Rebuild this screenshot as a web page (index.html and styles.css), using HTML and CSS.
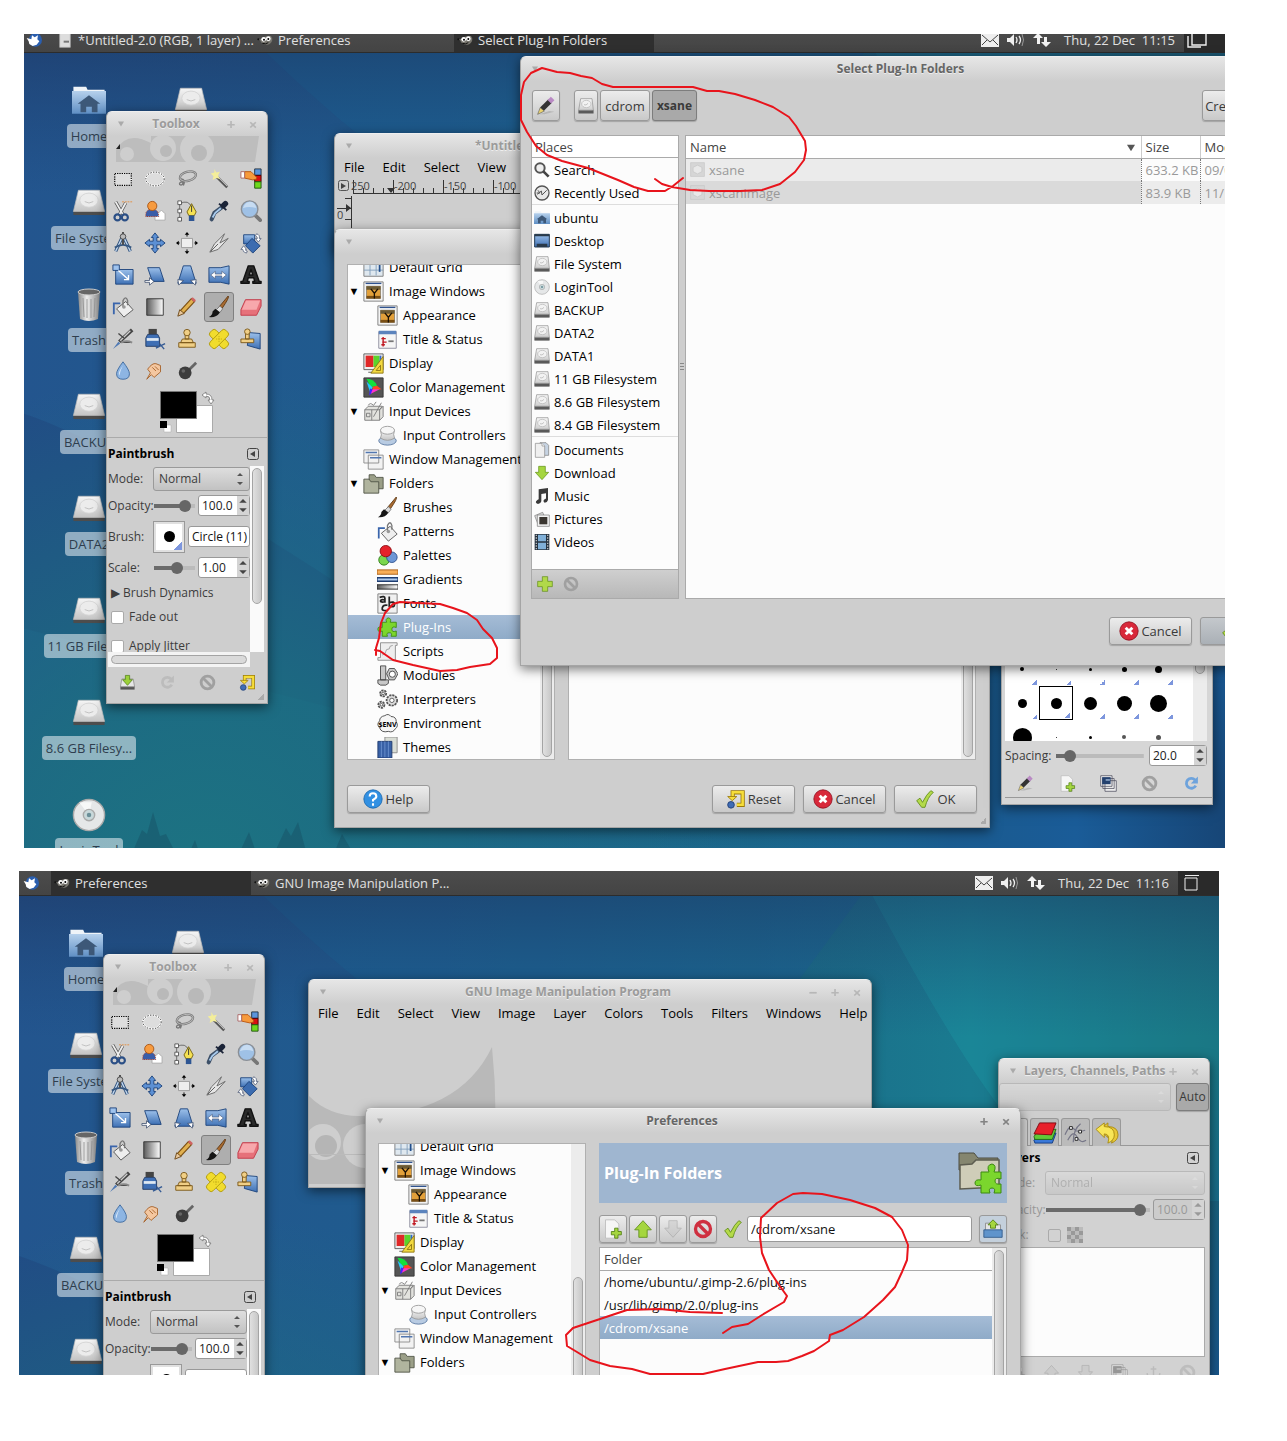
FILE: index.html
```html
<!DOCTYPE html>
<html lang="en">
<head>
<meta charset="utf-8">
<title>GIMP plug-in folders</title>
<link rel="stylesheet" href="styles.css">
</head>
<body>
<svg class="sprite" width="0" height="0" aria-hidden="true">
<defs>
<linearGradient id="gs" x2="0" y2="1"><stop stop-color="#f6f6f6"/><stop offset="1" stop-color="#c4c4c4"/></linearGradient>
<linearGradient id="gb" x2="0" y2="1"><stop stop-color="#9cc0ea"/><stop offset="1" stop-color="#3e70b4"/></linearGradient>
<linearGradient id="gh" x2="1" y2="0"><stop stop-color="#5b5b5b"/><stop offset="1" stop-color="#fff"/></linearGradient>
<linearGradient id="gm" x2="1" y2="0"><stop stop-color="#888"/><stop offset=".4" stop-color="#eee"/><stop offset="1" stop-color="#888"/></linearGradient>
<linearGradient id="gf" x2="0" y2="1"><stop stop-color="#b5d0ec"/><stop offset="1" stop-color="#5f8fc4"/></linearGradient>
<linearGradient id="wall" x2="1" y2="0"><stop stop-color="#23558e"/><stop offset=".35" stop-color="#1f5c8e"/><stop offset=".6" stop-color="#1b6b88"/><stop offset=".78" stop-color="#1a7b90"/><stop offset="1" stop-color="#1a6370"/></linearGradient>
<linearGradient id="dusk" x2="0" y2="1"><stop stop-color="#1c2e58" stop-opacity=".55"/><stop offset=".2" stop-color="#1c3e70" stop-opacity="0"/></linearGradient>
<radialGradient id="sea" gradientUnits="userSpaceOnUse" cx="180" cy="860" r="520"><stop stop-color="#1c7482"/><stop offset=".4" stop-color="#1c7080" stop-opacity=".8"/><stop offset="1" stop-color="#1c7080" stop-opacity="0"/></radialGradient>
<radialGradient id="deep" gradientUnits="userSpaceOnUse" cx="1240" cy="800" r="620"><stop stop-color="#16406e"/><stop offset=".3" stop-color="#1a5c98"/><stop offset=".5" stop-color="#1a5490" stop-opacity=".8"/><stop offset="1" stop-color="#1a5c90" stop-opacity="0"/></radialGradient>
</defs>
<symbol id="wallpaper" viewBox="0 0 1220 830">
<path fill="url(#wall)" d="M0 0h1220v830H0z"/>
<path fill="#1b6698" opacity=".55" d="M219 0C330 110 430 190 640 300L860 0z"/>
<path fill="#1c9aa6" opacity=".35" d="M840 0c60 110 120 230 220 330h160V0z"/>
<path fill="#20467e" opacity=".55" d="M0 385c60 20 180 80 330 180v120L0 600z"/>
<path fill="url(#dusk)" d="M0 0h1220v830H0z"/>
<path fill="url(#sea)" d="M0 0h1220v830H0z"/>
<path fill="url(#deep)" d="M0 0h1220v830H0z"/>
<path fill="#174c60" opacity=".4" d="M108 830l12-28 5 4 6-22 7 24 6-2 12 24zM165 830l8-18 6 18zM215 830l12-26 9 26zM250 830l14-30 5 8 7-14 10 36zM310 830l10-24 14 24z"/>
</symbol>
<symbol id="disk" viewBox="0 0 24 24"><path fill="#4d4d4d" d="M1 17h22v3.500H1z"/><path fill="url(#gs)" stroke="#bbb" stroke-width=".5" d="M4.500 3h15L23 18H1z"/><ellipse cx="12" cy="10" rx="6.500" ry="5" fill="#ececec" stroke="#d2d2d2" stroke-width=".6"/><path stroke="#bbb" stroke-width=".6" fill="none" d="M9 11q3 2 6 0"/></symbol>
<symbol id="hdd" viewBox="0 0 24 24"><path fill="url(#gs)" stroke="#8c8c8c" d="M4 1h17l2 17v5H1v-5z"/><ellipse cx="12.500" cy="9" rx="7" ry="5.500" fill="#f2f2f2" stroke="#b4b4b4"/><path fill="#5a5a5a" d="M1 18.500h22V23H1z"/><path stroke="#aaa" d="M2 18h20M9 10q3 2 6-2" fill="none"/></symbol>
<symbol id="home" viewBox="0 0 24 24"><path fill="#eef3f8" d="M1 2h9l1 2h12v4H1z"/><path fill="url(#gf)" d="M0 5h24v16H0z"/><path fill="#3d5878" d="M12 8l8 6h-2v6h-4v-4h-4v4H6v-6H4z"/></symbol>
<symbol id="trash" viewBox="0 0 24 34"><path fill="url(#gm)" d="M1 4h22l-2 27q-9 4-18 0z"/><ellipse cx="12" cy="4" rx="11" ry="3" fill="#666" stroke="#ccc"/><path stroke="#999" d="M6 10l1 19M10 11v19M14 11v19M18 10l-1 19"/></symbol>
<symbol id="cd" viewBox="0 0 24 24"><circle cx="12" cy="12" r="11" fill="#e5e7e8" stroke="#a9a9a9"/><path fill="#fff" opacity=".7" d="M12 12L5 3h9z"/><circle cx="12" cy="12" r="4" fill="#c8d8da" stroke="#aaa"/><circle cx="12" cy="12" r="1.600" fill="#6b8f98"/></symbol>
<symbol id="xfce" viewBox="0 0 24 24"><circle cx="14" cy="12" r="10" fill="#2a5eae"/><path fill="#fff" d="M1 9l7 2 1-6 4 3 5-3-1 6 3 3-4 5-6 2-5-3-1-4z"/></symbol>
<symbol id="wilber" viewBox="0 0 24 16"><path fill="#77756e" d="M2 6l3 1q8-6 16-5l2 4q0 7-7 9-9 0-11-6z"/><circle cx="10" cy="7" r="3.500" fill="#fff"/><circle cx="17" cy="6" r="3.500" fill="#fff"/><circle cx="10.500" cy="7.500" r="1.500"/><circle cx="17" cy="6.500" r="1.500"/><circle cx="2" cy="7" r="1.500" fill="#111"/><path stroke="#111" stroke-width="1.500" d="M8 13q5 2 9-1" fill="none"/></symbol>
<symbol id="doc" viewBox="0 0 24 24"><path fill="#ddd" stroke="#aaa" d="M4 1h16v22H4z"/><path fill="#777" d="M10 13h8v3h-8z"/></symbol>
<symbol id="mail" viewBox="0 0 18 14"><path fill="#eee" d="M0 0h18v14H0z"/><path stroke="#444" fill="none" d="M1 2l8 7 8-7M1 12l5-5M17 12l-5-5"/></symbol>
<symbol id="vol" viewBox="0 0 18 14"><path fill="#eee" d="M0 5h3l4-4v12L3 9H0z"/><path stroke="#eee" fill="none" stroke-width="1.300" d="M9 4q2 3 0 6M12 3q3 4 0 8"/><path stroke="#999" fill="none" d="M15 1q3 6 0 12"/></symbol>
<symbol id="net" viewBox="0 0 18 14"><path fill="#f2f2f2" d="M5 0l5 5H7v6H4V5H0zM11 4h3v5h4l-5 5-5-5h3z"/></symbol>
<symbol id="desk" viewBox="0 0 20 16"><path fill="none" stroke="#eee" stroke-width="1.400" d="M5 1h14v12H5zM1 4v11h13"/></symbol>
<symbol id="desk1" viewBox="0 0 20 16"><path fill="none" stroke="#eee" d="M4 3h12v12H4zM4 .500h14"/></symbol>
<symbol id="banner" viewBox="0 0 144 26"><path fill="#bdbdbd" d="M1 26V14Q12-6 36 7V0h108l-4 26z"/><g fill="#cecece"><circle cx="12" cy="18" r="7"/><circle cx="48" cy="12" r="13"/><circle cx="82" cy="13" r="17"/></g><circle cx="51" cy="15" r="6" fill="#b9b9b9"/><circle cx="84" cy="17" r="8" fill="#b9b9b9"/><path fill="#222" d="M5 8v5H1z"/></symbol>
<symbol id="rect" viewBox="0 0 24 24"><path fill="#ddd" stroke="#fff" stroke-width="1.300" d="M3 6h18v13H3z"/><path fill="none" stroke="#000" stroke-dasharray="1.500 1" stroke-width="1.300" d="M3 6h18v13H3z"/></symbol>
<symbol id="oval" viewBox="0 0 24 24"><ellipse cx="12" cy="12" rx="10" ry="7.500" fill="#ddd" stroke="#fff" stroke-width="2"/><ellipse cx="12" cy="12" rx="10" ry="7.500" fill="none" stroke="#222" stroke-dasharray="1.500 1.500"/></symbol>
<symbol id="lasso" viewBox="0 0 24 24"><g fill="none" stroke="#777"><ellipse cx="13" cy="9" rx="9" ry="5" stroke-width="2.600" transform="rotate(-15 13 9)"/><path d="M5 12q6 0 3 7M8 15q-5 0-4 3 3 2 4-3" stroke-width="1.500"/></g><ellipse cx="13" cy="9" rx="9" ry="5" fill="none" stroke="#bbb" transform="rotate(-15 13 9)"/></symbol>
<symbol id="wand" viewBox="0 0 24 24"><path stroke="#555" stroke-width="3" d="M9 9l12 12"/><path stroke="#ccc" d="M10 9l11 11"/><path fill="#f4ee9a" d="M7 1l2 4 4-1-2 4 2 4-4-1-4 2 1-4-3-3 4-1z"/></symbol>
<symbol id="colorsel" viewBox="0 0 24 24"><path fill="#5a94dc" stroke="#234" d="M16 1h7v7h-7z"/><path fill="#d81010" stroke="#400" d="M16 8h7v7h-7z"/><path fill="#6ed81c" stroke="#251" d="M16 15h7v7h-7z"/><path fill="#f79a3c" stroke="#b85510" d="M5 4h7l6 6v2l-4 1-9-2z"/><path fill="#fff" stroke="#a66" d="M1 4h4v7H1z"/></symbol>
<symbol id="scissors" viewBox="0 0 24 24"><path stroke="#555" stroke-width="3.500" d="M4 2l8 14M15 3L8 16"/><path stroke="#eee" stroke-width="2" d="M4 2l8 14M15 3L8 16"/><g fill="none" stroke="#2b4f86" stroke-width="2.400"><circle cx="6" cy="19" r="3.300"/><circle cx="14" cy="19" r="3.300"/></g><path stroke="#e58c3c" stroke-dasharray="2 1" d="M11 2h12"/></symbol>
<symbol id="person" viewBox="0 0 24 24"><path fill="#fff" stroke="#aaa" d="M12 14h4l3-3 4 4v7H12z"/><path fill="#3a5da8" stroke="#a1301d" stroke-dasharray="1 1" d="M2 18q-1-8 7-8 7 0 7 8z"/><circle cx="9" cy="6.500" r="5" fill="#f79b3f" stroke="#a85414"/></symbol>
<symbol id="pathtool" viewBox="0 0 24 24"><path stroke="#666" fill="none" d="M4 4v17M4 4q10-5 13 4"/><path fill="#fff" stroke="#555" d="M2 1h4v4H2zM2 10h4v4H2zM2 19h4v4H2z"/><path fill="#f5e153" stroke="#746110" d="M17 4l5 9-2 4h-6l-2-4z"/><path fill="#2d5593" d="M14 17h6v6h-6z"/><path stroke="#333" d="M17 6v7"/></symbol>
<symbol id="dropper" viewBox="0 0 24 24"><path stroke="#3d5068" stroke-width="4.500" stroke-linecap="round" fill="none" d="M4 21L7 14 15 8"/><path stroke="#a9cbed" stroke-width="2" fill="none" d="M5 19l3-5 6-5"/><path stroke="#1b2438" stroke-width="6" stroke-linecap="round" d="M17 6l2-2"/><path stroke="#1b2438" stroke-width="2" d="M12 4l8 7"/></symbol>
<symbol id="zoom" viewBox="0 0 24 24"><path stroke="#777" stroke-width="4" stroke-linecap="round" d="M17 17l5 5"/><circle cx="10.500" cy="10" r="9" fill="#9fc1e6" stroke="#8a8f96" stroke-width="1.500"/><path fill="#c7dcf2" d="M3 9q7-3 15 0-2-7-7-7T3 9z"/></symbol>
<symbol id="compass" viewBox="0 0 24 24"><path stroke="#345680" stroke-width="3.500" d="M11 6L4 21M13 6l7 15"/><path stroke="#c4d8ee" stroke-width="1.500" d="M11 6L4 21M13 6l7 15"/><path stroke="#345680" fill="none" stroke-width="2" d="M3 17q9-6 18 0"/><path stroke="#444" stroke-width="2" d="M12 0v14"/><circle cx="12" cy="5" r="3" fill="#bbb" stroke="#444"/></symbol>
<symbol id="move" viewBox="0 0 24 24"><path fill="#5c90d4" stroke="#1e447c" d="M12 1l4 5h-2v4h4V8l5 4-5 4v-2h-4v4h2l-4 5-4-5h2v-4H6v2l-5-4 5-4v2h4V6H8z"/></symbol>
<symbol id="align" viewBox="0 0 24 24"><path fill="#eee" stroke="#999" d="M6 7h12v10H6z"/><path d="M12 0l2.500 3h-5zM12 24l2.500-3h-5zM0 12l3-2.500v5zM24 12l-3-2.500v5z"/><path stroke="#000" d="M12 2v3M12 19v3M2 12h2M20 12h2"/></symbol>
<symbol id="crop" viewBox="0 0 24 24"><path fill="#e6e6e6" stroke="#666" d="M2 22l5-9L18 2l-5 10 9-5-11 12z"/><path stroke="#555" d="M3 21l8-8"/></symbol>
<symbol id="rotate" viewBox="0 0 24 24"><path fill="url(#gb)" stroke="#1e447c" d="M4 3h12v10H4z"/><path fill="#3c6cb0" stroke="#1e447c" d="M13 7l9 8-8 8-8-8z"/><path fill="#fff" stroke="#346" stroke-width=".7" d="M18 2q4 1 3 5h2l-3 4-3-4h2q0-2-2-3zM7 23q-4-1-4-4H1l3-4 3 4H6q0 2 2 2z"/></symbol>
<symbol id="scale" viewBox="0 0 24 24"><path fill="url(#gb)" stroke="#1e447c" d="M4 6h19v16H4z"/><path fill="#9fc3ee" stroke="#1e447c" d="M1 1h7v6H1z"/><path stroke="#fff" stroke-width="1.500" d="M7 7l11 10m0-5v5h-5" fill="none"/></symbol>
<symbol id="shear" viewBox="0 0 24 24"><path fill="url(#gb)" stroke="#1e447c" d="M4 4h13l5 15H9z"/><path fill="#fff" stroke="#346" stroke-width=".8" d="M1 18h5v-3l5 4-5 4v-3H1z"/></symbol>
<symbol id="persp" viewBox="0 0 24 24"><path fill="url(#gb)" stroke="#1e447c" d="M8 2h8l6 19H2z"/><path fill="#fff" stroke="#346" stroke-width=".8" d="M2 17l6 1-5 5zM22 17l-6 1 5 5z"/></symbol>
<symbol id="flip" viewBox="0 0 24 24"><path fill="url(#gb)" stroke="#1e447c" d="M1 4h13l9-2v20l-9-2H1z"/><path fill="#fff" stroke="#346" stroke-width=".6" d="M3 12l5-4v3h7V8l5 4-5 4v-3H8v3z"/></symbol>
<symbol id="texttool" viewBox="0 0 24 24"><path fill="#2a2a2a" stroke="#111" stroke-linejoin="round" stroke-width="1.500" fill-rule="evenodd" d="M9 2h6l6 17h2v2h-9v-2h2l-1-4H9l-1 4h2v2H1v-2h2zM10 12h4l-2-6z"/></symbol>
<symbol id="bucket" viewBox="0 0 24 24"><path stroke="#3a65ac" stroke-width="2" fill="none" d="M2 20V8h7"/><path fill="#eee" stroke="#555" d="M5 14l10-8 8 9-10 8z"/><path fill="none" stroke="#777" stroke-width="1.500" d="M12 12V5q3-6 5 0v5"/><circle cx="13" cy="12" r="2" fill="#999"/></symbol>
<symbol id="gradtool" viewBox="0 0 24 24"><path fill="url(#gh)" stroke="#333" d="M3 3h18v18H3z"/></symbol>
<symbol id="pencil" viewBox="0 0 24 24"><path stroke="#7b4e12" stroke-width="6" d="M6 18L19 4"/><path stroke="#e0b050" stroke-width="3.500" d="M6 18L18 5"/><path fill="#e7c79c" stroke="#6b4718" d="M2 22l2-7 5 4z"/><path stroke="#cf6464" stroke-width="5" d="M18 5l2-2"/></symbol>
<symbol id="brush" viewBox="0 0 24 24"><path fill="#a96b31" stroke="#5f3a15" d="M22 0q2 1-7 14l-3-2z"/><path fill="#ddd" stroke="#777" d="M13 11l3 3-3 4-4-3z"/><path fill="#151515" d="M8 14l5 4q-4 6-12 5 4-2 4-6z"/></symbol>
<symbol id="eraser" viewBox="0 0 24 24"><path fill="#e6717a" stroke="#c23a48" stroke-linejoin="round" d="M1 15L6 4h17v7l-5 10H1z"/><path fill="#f7a8ac" d="M2 15L6.500 5H22l-4 10z"/></symbol>
<symbol id="airbrush" viewBox="0 0 24 24"><path stroke="#444" stroke-width="4" d="M8 15L22 2"/><path stroke="#ccc" stroke-width="1.500" d="M9 14l11-11"/><path stroke="#888" stroke-width="2" d="M10 16q6-3 12 0"/><path stroke="#444" stroke-width="1.500" d="M7 6l6 5"/><path fill="#4f79b4" d="M7 15l2 2-8 6z"/></symbol>
<symbol id="ink" viewBox="0 0 24 24"><path fill="#444" d="M5 1h9v6H5z"/><path fill="#3f6fb4" stroke="#233c66" d="M4 7h11l2 4v9H2v-9z"/><path fill="#dfe8f2" d="M3 11h13v3H3z"/><path stroke="#345a94" stroke-width="1.500" d="M13 22l10-5M17 17l5 6"/></symbol>
<symbol id="stamp" viewBox="0 0 24 24"><g fill="#f0cf86" stroke="#7b5819"><path d="M3 16h18v5H3zM7 12h10l2 4H5zM10 6h4v6h-4z"/><circle cx="12" cy="5" r="3.500"/></g></symbol>
<symbol id="heal" viewBox="0 0 24 24"><g fill="#f1dc2d" stroke="#b39d10"><rect x="0" y="7.500" width="24" height="9" rx="3" transform="rotate(45 12 12)"/><rect x="0" y="7.500" width="24" height="9" rx="3" transform="rotate(-45 12 12)"/></g><path stroke="#b39d10" stroke-dasharray="1 1.500" d="M9 12h6M12 9v6"/></symbol>
<symbol id="pclone" viewBox="0 0 24 24"><path fill="url(#gb)" stroke="#1e447c" d="M10 5l12 1v17l-14-4z"/><g fill="#f0cf86" stroke="#7b5819"><path d="M1 12h14v4H1zM6 6h4v6H6z"/><circle cx="8" cy="4" r="3"/></g></symbol>
<symbol id="drop" viewBox="0 0 24 24"><path fill="#8db5e3" stroke="#3f6a9e" d="M12 2q7 9 7 13 0 6-7 6t-7-6q0-4 7-13z"/><path fill="#dbe9f8" d="M12 6q-6 8-4 11 1-6 4-11z"/></symbol>
<symbol id="smudge" viewBox="0 0 24 24"><path fill="#f4c7a0" stroke="#a5622c" d="M3 21l4-7-3-4q5-7 9-6l5 2v7l-7 6-3-3z"/><path stroke="#a5622c" fill="none" d="M9 8l4 4M12 7l4 4"/></symbol>
<symbol id="dodge" viewBox="0 0 24 24"><path stroke="#666" stroke-width="3" d="M14 11l8-8"/><circle cx="10" cy="14" r="7" fill="#3d3d3d"/><circle cx="8" cy="12" r="2" fill="#666"/></symbol>
<symbol id="swap" viewBox="0 0 14 14"><path fill="#fff" stroke="#777" stroke-width=".8" d="M1 4l4-3v2q6 0 6 6h2l-3 4-3-4h2q0-4-4-4v2z"/></symbol>
<symbol id="save" viewBox="0 0 24 24"><path fill="#555" d="M2 17h20v5H2z"/><path fill="#e6e6e6" stroke="#888" d="M4 7h16l2 11H2z"/><path fill="#9bd03a" stroke="#4d7c10" d="M9 2h6v6h4l-7 8-7-8h4z"/></symbol>
<symbol id="redo" viewBox="0 0 24 24"><path fill="none" stroke="currentColor" stroke-width="4" d="M18 15a7 7 0 1 1-1-8"/><path fill="currentColor" d="M21 2v10H11z"/></symbol>
<symbol id="no" viewBox="0 0 24 24"><circle cx="12" cy="12" r="9" fill="none" stroke="currentColor" stroke-width="4"/><path stroke="currentColor" stroke-width="4" d="M6 6l12 12"/></symbol>
<symbol id="reset" viewBox="0 0 24 24"><path fill="none" stroke="#9a7a08" stroke-width="5" d="M8 11V4h12v15h-7"/><path fill="none" stroke="#f6dd3a" stroke-width="3" d="M8 11V4h12v15h-7"/><path fill="#f6dd3a" stroke="#9a7a08" d="M2 9h11l-5.500 5z"/><circle cx="6" cy="19" r="4" fill="#3f6cb5" stroke="#1d3a70"/></symbol>
<symbol id="tri" viewBox="0 0 10 10"><path d="M0 1h10L5 9z"/></symbol>
<symbol id="updown" viewBox="0 0 8 16"><path fill="currentColor" d="M4 1l4 4H0zM4 15l4-4H0z"/></symbol>
<symbol id="grid" viewBox="0 0 24 24"><path fill="#dfe8ef" stroke="#777" d="M1 1h22v21H1z"/><path stroke="#7f9bb8" d="M8 1v20M15 1v20M1 8h22M1 15h22"/><path stroke="#234f8c" stroke-width="2" d="M19 6v11"/></symbol>
<symbol id="imgwin" viewBox="0 0 24 24"><path fill="#f3f3f3" stroke="#777" d="M1 1h22v22H1z"/><path fill="#2f5390" d="M3 2h18v1.500H3z"/><path fill="#e2a03a" stroke="#555" stroke-width=".6" d="M4 6h16v14H4z"/><path fill="#6b5a34" d="M4 6h16v4H4z"/><path fill="#7a4f14" d="M4 17h16v3H4z"/><path stroke="#1d1205" stroke-width="1.500" fill="none" d="M13 20v-6L9 9M13 14l4-5"/></symbol>
<symbol id="title" viewBox="0 0 24 24"><path fill="#f5f5f5" stroke="#889" d="M2 3h20v19H2z"/><path fill="#5b83bd" d="M2 2h20v4H2z"/><path stroke="#c01822" stroke-width="1.600" d="M7 9v11M5 11h5M6 15h5M5 18h4"/><path stroke="#777" stroke-width="2" d="M13 14h6"/></symbol>
<symbol id="display" viewBox="0 0 24 24"><path fill="#eee" stroke="#555" d="M1 1h22v18H1zM6 22h8"/><path fill="#e02828" d="M3 3h9v13H3z"/><path fill="#5bd42b" d="M12 3h7v13h-7z"/><path fill="#36c" d="M19 3h2v13h-2z"/><path fill="#f2d940" stroke="#8b7311" d="M23 4v19H9zM20 14v6h-5z"/></symbol>
<symbol id="color" viewBox="0 0 24 24"><path fill="#555" stroke="#333" d="M1 1h22v22H1z"/><path fill="#12e03c" d="M4 2q9 0 12 8l-7 2z"/><path fill="#f42" d="M16 10l5 4-10 1v-4z"/><path fill="#2cf" d="M4 5l7 7-3 5z"/><path fill="#42f" d="M8 13l5 2-6 6z"/><path fill="#f3c" d="M11 14l8 0-10 5z"/></symbol>
<symbol id="devices" viewBox="0 0 24 24"><path fill="#e2e2de" stroke="#777" d="M2 10l4-4h16l-3 4v12H2zM19 10l4-4v12l-4 4M2 10h17M10 10v12"/><path fill="none" stroke="#777" d="M6 5q2-4 6 0l3-4M4 14h4v4H4zM12 18l9-16"/></symbol>
<symbol id="ctrl" viewBox="0 0 24 24"><ellipse cx="12" cy="18" rx="10" ry="5" fill="#b8cbe2" stroke="#5877a0"/><path fill="url(#gs)" stroke="#999" d="M4 6q2 6 0 9 8 5 16 0-2-4 0-9z"/><ellipse cx="12" cy="6" rx="8" ry="4.500" fill="#f6f6f6" stroke="#999"/></symbol>
<symbol id="wins" viewBox="0 0 24 24"><path fill="#f2f2f2" stroke="#888" d="M1 1h17v15H1zM6 7h17v16H6z"/><path stroke="#5277b0" stroke-width="1.600" d="M3 4h13M8 10h13"/></symbol>
<symbol id="folders" viewBox="0 0 24 24"><path fill="#9b9f88" stroke="#4d5144" d="M7 2h6l2 3h8v13H7z"/><path fill="#b0b49e" stroke="#4d5144" d="M1 7h6l2 3h9v13H1z"/></symbol>
<symbol id="palette" viewBox="0 0 24 24"><circle cx="8" cy="17" r="6" fill="#7ad64e" stroke="#2d7a15"/><circle cx="17" cy="14" r="6" fill="#6d97d6" stroke="#2a4f8c"/><circle cx="10" cy="7" r="6.500" fill="#e5222b" stroke="#8b0d12"/></symbol>
<symbol id="grads" viewBox="0 0 24 24"><path fill="#f8ae58" stroke="#a65a10" d="M0 1h24v5H0z"/><path fill="#aecbf0" stroke="#1d3c70" stroke-width="1.500" d="M0 10h24v4H0z"/><path fill="url(#gh)" stroke="#222" d="M0 18h24v5H0z"/></symbol>
<symbol id="fonts" viewBox="0 0 24 24"><path fill="#f0f0f0" stroke="#777" d="M1 1h22v22H1z"/><g fill="none" stroke="#222" stroke-width="2"><path d="M3 5q6-2 6 1v5M9 8q-5-1-5 1t5 1M14 4v12M14 11q6-2 6 2t-6 2M12 14q-5-1-6 3t6 3"/></g></symbol>
<symbol id="plug" viewBox="0 0 24 24"><path fill="#7bd62d" stroke="#3c8a10" stroke-linejoin="round" d="M6 6h5q-2-4 2-5 4 1 2 5h7v6q-5-2-5 2t5 2v6h-6q2-4-2-4t-2 4H6v-6q-5 2-5-2t5-2z"/></symbol>
<symbol id="script" viewBox="0 0 24 24"><path fill="#eee" stroke="#888" d="M4 2h19v3h-2v17H1v-3h3z"/><path fill="none" stroke="#999" d="M6 16q4-1 4-4t4-3q0-4 4-4"/></symbol>
<symbol id="bolt" viewBox="0 0 24 24"><path fill="#c8c8c8" stroke="#444" d="M4 1h6v16H4zM1 17h12v4l-3 2H4l-3-2zM14 4h6l4 6-4 7h-6l-3-7z"/><circle cx="17.500" cy="10.500" r="3.500" fill="#fff" stroke="#444"/></symbol>
<symbol id="gears" viewBox="0 0 24 24"><g fill="#ddd" stroke="#555" stroke-dasharray="2.500 1" stroke-width="2"><circle cx="7" cy="5" r="3.500"/><circle cx="5" cy="18" r="3.500"/><circle cx="17" cy="13" r="6"/></g><g fill="#fff" stroke="#555"><circle cx="7" cy="5" r="1.500"/><circle cx="5" cy="18" r="1.500"/><circle cx="17" cy="13" r="2.500"/></g></symbol>
<symbol id="env" viewBox="0 0 24 24"><path fill="#f6f6f6" stroke="#444" d="M3 17q-4-4 0-8 0-5 6-6 4-3 7 1 6 0 6 6 3 5-1 8-3 5-8 3-8 2-10-4z"/><text x="12" y="15.500" font-size="8" font-weight="700" text-anchor="middle">$ENV</text></symbol>
<symbol id="themes" viewBox="0 0 24 24"><path fill="#d9ddd5" stroke="#888" d="M9 0h14v18H9z"/><path fill="#3961a6" stroke="#1d376c" d="M1 5h16v19H1z"/><path stroke="#6d92cf" d="M5 5v18M9 5v18M13 5v18"/></symbol>
<symbol id="help" viewBox="0 0 24 24"><circle cx="12" cy="12" r="11" fill="#3290e2" stroke="#1b66ac"/><path fill="none" stroke="#fff" stroke-width="2.500" d="M8 9q0-4 4-4t4 4q0 2-4 4v2M12 17v3"/></symbol>
<symbol id="cancel" viewBox="0 0 24 24"><circle cx="12" cy="12" r="11" fill="#d8283a" stroke="#8f1220"/><path stroke="#fff" stroke-width="3.500" d="M8 8l8 8M16 8l-8 8"/></symbol>
<symbol id="ok" viewBox="0 0 24 24"><path fill="#b4da4a" stroke="#5e8a14" stroke-linejoin="round" d="M2 14l4-3 3 5Q14 6 19 2l3 2q-7 6-10 18H8z"/></symbol>
<symbol id="edit" viewBox="0 0 24 24"><path fill="#999" opacity=".5" d="M4 22l12-4 6 1-12 3z"/><path stroke="#333" stroke-width="6" d="M7 16L17 6"/><path stroke="#b98ac4" stroke-width="6" d="M16 7l4-4"/><path fill="#ecd470" stroke="#555" stroke-width=".7" d="M2 22l3-8 5 4z"/></symbol>
<symbol id="search" viewBox="0 0 24 24"><circle cx="9" cy="9" r="7" fill="#eee" stroke="#555" stroke-width="3"/><path stroke="#444" stroke-width="4" d="M14 14l8 8"/></symbol>
<symbol id="clock" viewBox="0 0 24 24"><circle cx="12" cy="12" r="10.500" fill="#e8e8e8" stroke="#555" stroke-width="2"/><path fill="none" stroke="#555" stroke-width="1.500" d="M5 14l6-5 1 6 7-7M4 12h5l-3-4"/></symbol>
<symbol id="monitor" viewBox="0 0 24 24"><path fill="url(#gb)" stroke="#233b55" stroke-width="1.500" d="M1 2h22v19H1z"/><path fill="#2a3a4a" d="M1 2h22v3H1zM4 16h16v5H4z"/></symbol>
<symbol id="docs" viewBox="0 0 24 24"><path fill="#c6d3e2" stroke="#777" d="M9 1h9l4 4v15H9z"/><path fill="#efefef" stroke="#888" d="M2 2h10l4 4v17H2z"/><path fill="#fff" stroke="#888" d="M12 2v4h4"/></symbol>
<symbol id="down" viewBox="0 0 24 24"><path fill="#a5d63f" stroke="#5c8d14" stroke-linejoin="round" d="M7 2h10v9h5L12 22 2 11h5z"/></symbol>
<symbol id="music" viewBox="0 0 24 24"><path fill="#3a3a3a" d="M7 2l14-2v18q-1 4-5 4-4-3 1-6h1V8l-7 1v11q-1 4-5 4-6-2-1-6l2-1z"/></symbol>
<symbol id="pics" viewBox="0 0 24 24"><path fill="#ddd" stroke="#777" d="M1 7l12-5 5 12-12 6z"/><path fill="#f4f4f4" stroke="#777" d="M5 6h18v17H5z"/><path fill="#3a3630" d="M8 9h12v11H8z"/></symbol>
<symbol id="video" viewBox="0 0 24 24"><path fill="#263340" d="M1 0h22v24H1z"/><path fill="#80b0d8" d="M6 1h12v10H6zM6 13h12v10H6z"/><path stroke="#bbb" stroke-width="2" stroke-dasharray="2 2" d="M3.500 1v22M20.500 1v22"/></symbol>
<symbol id="plus" viewBox="0 0 24 24"><path fill="#b1d94a" stroke="#5e8a14" stroke-linejoin="round" d="M8 1h8v7h7v8h-7v7H8v-7H1V8h7z"/></symbol>
<symbol id="exe" viewBox="0 0 24 24"><path fill="#d6d6d6" stroke="#c4c4c4" d="M1 1h22v22H1z"/><path fill="#e8e8e8" stroke="#c2c2c2" d="M12 5l7 3.500v7L12 19l-7-3.500v-7z"/></symbol>
<symbol id="newdoc" viewBox="0 0 24 24"><path fill="#f6f6f6" stroke="#bbb" d="M3 1h11l5 5v17H3z"/><path fill="#a5d63f" stroke="#4e7d10" d="M14 11h4v4h4v4h-4v4h-4v-4h-4v-4h4z"/></symbol>
<symbol id="copy" viewBox="0 0 24 24"><path fill="#eee" stroke="#445" d="M7 8h16v15H7zM4 5h16v14H4zM1 1h16v15H1z"/><path fill="#24416e" d="M3 3h12v10H3z"/><path fill="#9fb7d6" d="M8 6h6v2H8z"/></symbol>
<symbol id="bigplug" viewBox="0 0 44 44"><path fill="#85866f" stroke="#4d4d40" d="M1 2h15l4 5h20v12H1z"/><path fill="#cfcdb8" stroke="#5d5d50" stroke-width="1.500" d="M2 38V14l12-1 4-4h23v27z"/><path fill="#7bd62d" stroke="#3c8a10" stroke-linejoin="round" d="M23 21h8q-3-7 3-8 5 1 2 8h7v7q-6-2-6 2t6 3v9h-7q2-5-2-5t-2 5h-9v-8q-6 2-6-2t6-3z"/></symbol>
<symbol id="open" viewBox="0 0 24 24"><path fill="#e4e4e4" stroke="#888" d="M3 5h6l2 2h10v8H3z"/><path fill="#5f94cc" stroke="#2c5686" d="M1 13h22v9H1z"/><path fill="#a5d63f" stroke="#4e7d10" d="M12 1l6 6h-3v4H9V7H6z"/></symbol>
<symbol id="layers" viewBox="0 0 26 24"><path fill="#3a78d8" stroke="#123a80" d="M1 20l5-8h19l-4 11H2z"/><path fill="#62c838" stroke="#1f6a10" d="M1 16l5-8h19l-4 11H2z"/><path fill="#e8202a" stroke="#7c0810" d="M1 13L7 1h18l-5 13z"/></symbol>
<symbol id="paths" viewBox="0 0 26 24"><path fill="none" stroke="#778" stroke-width="1.300" d="M1 14Q6 2 10 7t13 2M4 20q6-12 10-4t10 4M10 22q0-14 8-20"/><path fill="#fff" stroke="#222" d="M6 5h3v3H6zM16 9h3v3h-3zM12 17h3v3h-3z"/></symbol>
<symbol id="undo" viewBox="0 0 26 24"><path fill="#e8c838" stroke="#a98b10" d="M5 8l9-7v4q11 0 11 9 0 6-7 9 3-10-4-10v4z"/><path fill="#f8e658" stroke="#a98b10" d="M1 8l9-7v4q11 0 11 9 0 6-7 9 3-10-4-10v4z"/></symbol>
<symbol id="anchor" viewBox="0 0 24 24"><path fill="none" stroke="#999" stroke-width="2" d="M12 3v18M8 7h8M3 13q1 8 9 8t9-8"/></symbol>
<symbol id="checker" viewBox="0 0 16 16"><path fill="#bbb" d="M0 0h16v16H0z"/><path fill="#999" d="M0 0h4v4H0zM8 0h4v4H8zM4 4h4v4H4zM12 4h4v4h-4zM0 8h4v4H0zM8 8h4v4H8zM4 12h4v4H4zM12 12h4v4h-4z"/></symbol>
<symbol id="menubox" viewBox="0 0 12 12"><rect x=".5" y=".5" width="11" height="11" rx="2" fill="none" stroke="#444"/><path fill="#444" d="M8 3v6L3 6z"/></symbol>
</svg>

<main>
<section class="screen first" aria-label="Selecting the plug-in folder">
<div class="desktop cropped">
<svg class="wallpaper"><use href="#wallpaper"/></svg>
<header class="panel">
<button class="start" aria-label="Menu"><svg><use href="#xfce"/></svg></button>
<button class="task"><svg><use href="#doc"/></svg>*Untitled-2.0 (RGB, 1 layer) ...</button>
<button class="task"><svg><use href="#wilber"/></svg>Preferences</button>
<button class="task active"><svg><use href="#wilber"/></svg>Select Plug-In Folders</button>
<div class="tray"><svg class="t18"><use href="#mail"/></svg><svg class="t18"><use href="#vol"/></svg><svg class="t18"><use href="#net"/></svg><time>Thu, 22 Dec&nbsp; 11:15</time><button class="show" aria-label="Show desktop"><svg class="t20"><use href="#desk"/></svg></button></div>
</header>
<ul class="shortcuts">
<li><svg><use href="#home"/></svg><span>Home</span></li>
<li><svg><use href="#disk"/></svg><span>File System</span></li>
<li><svg><use href="#trash"/></svg><span>Trash</span></li>
<li><svg><use href="#disk"/></svg><span>BACKUP</span></li>
<li><svg><use href="#disk"/></svg><span>DATA2</span></li>
<li><svg><use href="#disk"/></svg><span>11 GB Filesy...</span></li>
<li><svg><use href="#disk"/></svg><span>8.6 GB Filesy...</span></li>
<li><svg><use href="#cd"/></svg><span>LoginTool</span></li>
</ul>
<ul class="shortcuts second"><li><svg><use href="#disk"/></svg></li></ul>

<section class="window image1">
<div class="titlebar off"><svg class="tri"><use href="#tri"/></svg><h2>*Untitled</h2></div>
<nav class="menubar"><a href="#">File</a><a href="#">Edit</a><a href="#">Select</a><a href="#">View</a></nav>
<svg class="ruler" viewBox="0 0 186 50"><rect x="3.500" y="2.500" width="10" height="10" rx="2" fill="none" stroke="#555"/><path fill="#444" d="M6 5l5 3-5 3z"/><path stroke="#333" fill="none" d="M19 15.500h167M18.500 2v14M58.500 2v14M108.500 2v14M158.500 2v14M28.500 10v5M38.500 10v5M48.500 10v5M68.500 10v5M78.500 10v5M88.500 10v5M98.500 10v5M118.500 10v5M128.500 10v5M138.500 10v5M148.500 10v5M168.500 10v5M178.500 10v5M16.500 18v32M2 30.500h14M10 41.500h6M10 20.500h6"/><path fill="#333" d="M52 10h8l-4 5zM11 26l5 4-5 4z"/><g font-size="11" fill="#444"><text x="16" y="12">250</text><text x="59" y="12">-200</text><text x="109" y="12">-150</text><text x="159" y="12">-100</text><text x="2" y="41">0</text></g></svg>
</section>

<section class="window prefs one">
<div class="titlebar off"><svg class="tri"><use href="#tri"/></svg><h2></h2></div>
<div class="prefs-body">
<div class="tree-box"><ul class="tree">
<li><i></i><svg><use href="#grid"/></svg>Default Grid</li>
<li><i>▼</i><svg><use href="#imgwin"/></svg>Image Windows</li>
<li class="sub"><i></i><svg><use href="#imgwin"/></svg>Appearance</li>
<li class="sub"><i></i><svg><use href="#title"/></svg>Title &amp; Status</li>
<li><i></i><svg><use href="#display"/></svg>Display</li>
<li><i></i><svg><use href="#color"/></svg>Color Management</li>
<li><i>▼</i><svg><use href="#devices"/></svg>Input Devices</li>
<li class="sub"><i></i><svg><use href="#ctrl"/></svg>Input Controllers</li>
<li><i></i><svg><use href="#wins"/></svg>Window Management</li>
<li><i>▼</i><svg><use href="#folders"/></svg>Folders</li>
<li class="sub"><i></i><svg><use href="#brush"/></svg>Brushes</li>
<li class="sub"><i></i><svg><use href="#bucket"/></svg>Patterns</li>
<li class="sub"><i></i><svg><use href="#palette"/></svg>Palettes</li>
<li class="sub"><i></i><svg><use href="#grads"/></svg>Gradients</li>
<li class="sub"><i></i><svg><use href="#fonts"/></svg>Fonts</li>
<li class="sub selected"><i></i><svg><use href="#plug"/></svg>Plug-Ins</li>
<li class="sub"><i></i><svg><use href="#script"/></svg>Scripts</li>
<li class="sub"><i></i><svg><use href="#bolt"/></svg>Modules</li>
<li class="sub"><i></i><svg><use href="#gears"/></svg>Interpreters</li>
<li class="sub"><i></i><svg><use href="#env"/></svg>Environment</li>
<li class="sub"><i></i><svg><use href="#themes"/></svg>Themes</li>
</ul><div class="vscroll"><b></b></div></div>
<div class="blank"><div class="vscroll"><b></b></div></div>
</div>
<footer class="actions"><button class="btn"><svg><use href="#help"/></svg>Help</button><span class="grow"></span><button class="btn"><svg><use href="#reset"/></svg>Reset</button><button class="btn"><svg><use href="#cancel"/></svg>Cancel</button><button class="btn"><svg><use href="#ok"/></svg>OK</button></footer>
<span class="grip"></span>
</section>

<section class="window brushes">
<div class="brush-box"><div class="brush-grid">
<span><i class="d4"></i></span><span><i class="d1"></i></span><span><i class="d3"></i></span><span><i class="d5"></i></span><span><i class="d7"></i></span>
<span><i class="d9"></i></span><span class="picked"><i class="d11"></i></span><span><i class="d13"></i></span><span><i class="d15"></i></span><span><i class="d17"></i></span>
<span><i class="d19"></i></span><span><i class="d1"></i></span><span><i class="d3"></i></span><span><i class="d4 soft"></i></span><span><i class="d5 soft"></i></span>
</div><div class="vscroll"><b></b></div></div>
<div class="spacing"><label for="spacing">Spacing:</label><input type="range" id="spacing" class="range" style="--v:14%" value="10"><span class="spin"><input value="20.0" aria-label="Spacing value"><svg><use href="#updown"/></svg></span></div>
<div class="tool-row"><svg><use href="#edit"/></svg><svg><use href="#newdoc"/></svg><svg><use href="#copy"/></svg><svg class="grey"><use href="#no"/></svg><svg class="blue"><use href="#redo"/></svg></div>
</section>

<section class="window toolbox">
<div class="titlebar off"><svg class="tri"><use href="#tri"/></svg><h2>Toolbox</h2><span>+</span><span>×</span></div>
<svg class="banner"><use href="#banner"/></svg>
<div class="tools">
<button aria-label="Rectangle"><svg><use href="#rect"/></svg></button><button aria-label="Ellipse"><svg><use href="#oval"/></svg></button><button aria-label="Lasso"><svg><use href="#lasso"/></svg></button><button aria-label="Fuzzy"><svg><use href="#wand"/></svg></button><button aria-label="By color"><svg><use href="#colorsel"/></svg></button>
<button aria-label="Scissors"><svg><use href="#scissors"/></svg></button><button aria-label="Foreground"><svg><use href="#person"/></svg></button><button aria-label="Paths"><svg><use href="#pathtool"/></svg></button><button aria-label="Picker"><svg><use href="#dropper"/></svg></button><button aria-label="Zoom"><svg><use href="#zoom"/></svg></button>
<button aria-label="Measure"><svg><use href="#compass"/></svg></button><button aria-label="Move"><svg><use href="#move"/></svg></button><button aria-label="Align"><svg><use href="#align"/></svg></button><button aria-label="Crop"><svg><use href="#crop"/></svg></button><button aria-label="Rotate"><svg><use href="#rotate"/></svg></button>
<button aria-label="Scale"><svg><use href="#scale"/></svg></button><button aria-label="Shear"><svg><use href="#shear"/></svg></button><button aria-label="Perspective"><svg><use href="#persp"/></svg></button><button aria-label="Flip"><svg><use href="#flip"/></svg></button><button aria-label="Text"><svg><use href="#texttool"/></svg></button>
<button aria-label="Fill"><svg><use href="#bucket"/></svg></button><button aria-label="Blend"><svg><use href="#gradtool"/></svg></button><button aria-label="Pencil"><svg><use href="#pencil"/></svg></button><button class="on" aria-label="Paintbrush"><svg><use href="#brush"/></svg></button><button aria-label="Eraser"><svg><use href="#eraser"/></svg></button>
<button aria-label="Airbrush"><svg><use href="#airbrush"/></svg></button><button aria-label="Ink"><svg><use href="#ink"/></svg></button><button aria-label="Clone"><svg><use href="#stamp"/></svg></button><button aria-label="Heal"><svg><use href="#heal"/></svg></button><button aria-label="Perspective clone"><svg><use href="#pclone"/></svg></button>
<button aria-label="Blur"><svg><use href="#drop"/></svg></button><button aria-label="Smudge"><svg><use href="#smudge"/></svg></button><button aria-label="Dodge"><svg><use href="#dodge"/></svg></button>
</div>
<svg class="swatches" viewBox="0 0 56 46"><path fill="#fff" stroke="#aaa" d="M16.500 14.500h36v27h-36z"/><path stroke="#777" d="M.500.500h36v27H.500z"/><path fill="#fff" stroke="#aaa" stroke-width=".5" d="M4 34h7v7H4z"/><path d="M0 30h7v7H0z"/><svg x="41" width="14" height="14"><use href="#swap"/></svg></svg>
<div class="dock-head"><h3>Paintbrush</h3><svg><use href="#menubox"/></svg></div>
<div class="options"><div class="fields">
<div class="row r26"><label for="mode1">Mode:</label><select id="mode1" class="combo"><option>Normal</option></select></div>
<div class="row r27"><label for="op1">Opacity:</label><input type="range" id="op1" class="range" style="--v:78%" value="86"><span class="spin"><input value="100.0" aria-label="Opacity value"><svg><use href="#updown"/></svg></span></div>
<div class="row r35"><label for="br1">Brush:</label><button class="swatch" aria-label="Choose brush"><i class="d11"></i></button><input id="br1" class="name" value="Circle (11)"></div>
<div class="row r27"><label for="sc1">Scale:</label><input type="range" id="sc1" class="range" style="--v:56%" value="58"><span class="spin"><input value="1.00" aria-label="Scale value"><svg><use href="#updown"/></svg></span></div>
<div class="row r24 dyn"><i>▶</i>Brush Dynamics</div>
<label class="row r24 tick"><input type="checkbox">Fade out</label>
<label class="row r34 tick"><input type="checkbox">Apply Jitter</label>
</div><div class="vscroll"><b></b></div></div>
<div class="hscroll"><b></b></div>
<div class="tool-row"><svg><use href="#save"/></svg><svg class="pale"><use href="#redo"/></svg><svg class="grey"><use href="#no"/></svg><svg><use href="#reset"/></svg></div>
<span class="grip"></span>
</section>

<section class="window chooser">
<div class="titlebar"><svg class="tri"><use href="#tri"/></svg><h2>Select Plug-In Folders</h2><span>+</span><span>×</span></div>
<div class="pathbar"><button class="btn edit" aria-label="Type a file name"><svg><use href="#edit"/></svg></button><button class="btn" aria-label="Root"><svg class="s16"><use href="#hdd"/></svg></button><button class="btn crumb">cdrom</button><button class="btn pressed">xsane</button><span class="grow"></span><button class="btn create">Create Folder</button></div>
<div class="panes">
<div class="places"><h3>Places</h3><ul>
<li><svg><use href="#search"/></svg>Search</li><li><svg><use href="#clock"/></svg>Recently Used</li>
<li class="ruled"><svg><use href="#home"/></svg>ubuntu</li><li><svg><use href="#monitor"/></svg>Desktop</li><li><svg><use href="#hdd"/></svg>File System</li><li><svg><use href="#cd"/></svg>LoginTool</li><li><svg><use href="#hdd"/></svg>BACKUP</li><li><svg><use href="#hdd"/></svg>DATA2</li><li><svg><use href="#hdd"/></svg>DATA1</li><li><svg><use href="#hdd"/></svg>11 GB Filesystem</li><li><svg><use href="#hdd"/></svg>8.6 GB Filesystem</li><li><svg><use href="#hdd"/></svg>8.4 GB Filesystem</li>
<li class="ruled"><svg><use href="#docs"/></svg>Documents</li><li><svg><use href="#down"/></svg>Download</li><li><svg><use href="#music"/></svg>Music</li><li><svg><use href="#pics"/></svg>Pictures</li><li><svg><use href="#video"/></svg>Videos</li>
</ul><div class="places-bar"><svg><use href="#plus"/></svg><svg class="grey"><use href="#no"/></svg></div></div>
<div class="sash"></div>
<div class="files"><table><thead><tr><th>Name<svg class="tri"><use href="#tri"/></svg></th><th class="c-size">Size</th><th class="c-mod">Modified</th></tr></thead><tbody><tr><td><svg><use href="#exe"/></svg>xsane</td><td>633.2 KB</td><td>09/07/2011</td></tr><tr><td><svg><use href="#exe"/></svg>xscanimage</td><td>83.9 KB</td><td>11/10/2010</td></tr></tbody></table></div>
</div>
<footer class="actions"><span class="grow"></span><button class="btn"><svg><use href="#cancel"/></svg>Cancel</button><button class="btn dim"><svg><use href="#ok"/></svg>OK</button></footer>
</section>
<svg class="marks"><g transform="translate(-22 -28)"><path d="M655 179L662 184 672 187 690 190 709 191H740L762 190 780 184 795 172 804 160 806 150 805 141 796 126 789 117 773 107 755 100 735 94 719 91H707L693 87H613L602 84 592 78 581 76 570 73 557 72 542 68 531 73 524 82 521 95V120L527 132 536 146 547 155 562 161 588 168 603 174 618 180 634 187 648 191H665L673 186 683 178"/><path d="M376 655V648L379 638 381 623 385 613 393 604 400 602 418 603 440 604 453 608 467 613 477 620 483 629 492 638 497 648V658L490 664 470 667 457 670 440 671 413 665 393 660 380 651 375 650"/></g></svg>
</div>
</section>

<section class="screen last" aria-label="Plug-in folder added">
<div class="desktop">
<svg class="wallpaper"><use href="#wallpaper"/></svg>
<header class="panel">
<button class="start" aria-label="Menu"><svg><use href="#xfce"/></svg></button>
<button class="task active"><svg><use href="#wilber"/></svg>Preferences</button>
<button class="task"><svg><use href="#wilber"/></svg>GNU Image Manipulation P...</button>
<div class="tray"><svg class="t18"><use href="#mail"/></svg><svg class="t18"><use href="#vol"/></svg><svg class="t18"><use href="#net"/></svg><time>Thu, 22 Dec&nbsp; 11:16</time><button class="show" aria-label="Show desktop"><svg class="t20"><use href="#desk1"/></svg></button></div>
</header>
<ul class="shortcuts">
<li><svg><use href="#home"/></svg><span>Home</span></li>
<li><svg><use href="#disk"/></svg><span>File System</span></li>
<li><svg><use href="#trash"/></svg><span>Trash</span></li>
<li><svg><use href="#disk"/></svg><span>BACKUP</span></li>
<li><svg><use href="#disk"/></svg><span>DATA2</span></li>
</ul>
<ul class="shortcuts second"><li><svg><use href="#disk"/></svg></li></ul>

<section class="window image2">
<div class="titlebar off"><svg class="tri"><use href="#tri"/></svg><h2>GNU Image Manipulation Program</h2><span>−</span><span>+</span><span>×</span></div>
<nav class="menubar"><a href="#">File</a><a href="#">Edit</a><a href="#">Select</a><a href="#">View</a><a href="#">Image</a><a href="#">Layer</a><a href="#">Colors</a><a href="#">Tools</a><a href="#">Filters</a><a href="#">Windows</a><a href="#">Help</a></nav>
<svg class="silhouette" viewBox="0 0 562 160"><path fill="#b9b9b9" d="M0 72Q20 92 50 92 150 92 183 23 190 90 183 160H0z"/><g fill="#cecece"><circle cx="14" cy="118" r="18"/><circle cx="56" cy="122" r="22"/></g><circle cx="17" cy="122" r="11" fill="#b5b5b5"/><path stroke="#bbb" d="M0 130.500h562"/></svg>
</section>

<section class="window layers">
<div class="titlebar off"><svg class="tri"><use href="#tri"/></svg><h2>Layers, Channels, Paths</h2><span>+</span><span>×</span></div>
<div class="image-row"><select class="combo faded" aria-label="Image"><option></option></select><button class="btn pressed auto">Auto</button></div>
<div class="tabs"><span class="tab now"></span><span class="tab"><svg><use href="#layers"/></svg></span><span class="tab"><svg><use href="#paths"/></svg></span><span class="tab"><svg><use href="#undo"/></svg></span></div>
<div class="tab-body">
<div class="dock-head"><h3>Layers</h3><svg><use href="#menubox"/></svg></div>
<div class="row r26"><label for="lm">Mode:</label><select id="lm" class="combo faded"><option>Normal</option></select></div>
<div class="row r27"><label for="lo">Opacity:</label><input type="range" id="lo" class="range" style="--v:92%" value="96"><span class="spin faded"><input value="100.0" aria-label="Opacity value"><svg><use href="#updown"/></svg></span></div>
<div class="row r24"><label for="lk">Lock:</label><input type="checkbox" id="lk"><svg class="s16"><use href="#checker"/></svg></div>
<div class="layer-list"></div>
<div class="tool-row washed"><svg><use href="#newdoc"/></svg><svg class="turned"><use href="#down"/></svg><svg><use href="#down"/></svg><svg><use href="#copy"/></svg><svg><use href="#anchor"/></svg><svg class="grey"><use href="#no"/></svg></div>
</div>
</section>

<section class="window toolbox">
<div class="titlebar off"><svg class="tri"><use href="#tri"/></svg><h2>Toolbox</h2><span>+</span><span>×</span></div>
<svg class="banner"><use href="#banner"/></svg>
<div class="tools">
<button aria-label="Rectangle"><svg><use href="#rect"/></svg></button><button aria-label="Ellipse"><svg><use href="#oval"/></svg></button><button aria-label="Lasso"><svg><use href="#lasso"/></svg></button><button aria-label="Fuzzy"><svg><use href="#wand"/></svg></button><button aria-label="By color"><svg><use href="#colorsel"/></svg></button>
<button aria-label="Scissors"><svg><use href="#scissors"/></svg></button><button aria-label="Foreground"><svg><use href="#person"/></svg></button><button aria-label="Paths"><svg><use href="#pathtool"/></svg></button><button aria-label="Picker"><svg><use href="#dropper"/></svg></button><button aria-label="Zoom"><svg><use href="#zoom"/></svg></button>
<button aria-label="Measure"><svg><use href="#compass"/></svg></button><button aria-label="Move"><svg><use href="#move"/></svg></button><button aria-label="Align"><svg><use href="#align"/></svg></button><button aria-label="Crop"><svg><use href="#crop"/></svg></button><button aria-label="Rotate"><svg><use href="#rotate"/></svg></button>
<button aria-label="Scale"><svg><use href="#scale"/></svg></button><button aria-label="Shear"><svg><use href="#shear"/></svg></button><button aria-label="Perspective"><svg><use href="#persp"/></svg></button><button aria-label="Flip"><svg><use href="#flip"/></svg></button><button aria-label="Text"><svg><use href="#texttool"/></svg></button>
<button aria-label="Fill"><svg><use href="#bucket"/></svg></button><button aria-label="Blend"><svg><use href="#gradtool"/></svg></button><button aria-label="Pencil"><svg><use href="#pencil"/></svg></button><button class="on" aria-label="Paintbrush"><svg><use href="#brush"/></svg></button><button aria-label="Eraser"><svg><use href="#eraser"/></svg></button>
<button aria-label="Airbrush"><svg><use href="#airbrush"/></svg></button><button aria-label="Ink"><svg><use href="#ink"/></svg></button><button aria-label="Clone"><svg><use href="#stamp"/></svg></button><button aria-label="Heal"><svg><use href="#heal"/></svg></button><button aria-label="Perspective clone"><svg><use href="#pclone"/></svg></button>
<button aria-label="Blur"><svg><use href="#drop"/></svg></button><button aria-label="Smudge"><svg><use href="#smudge"/></svg></button><button aria-label="Dodge"><svg><use href="#dodge"/></svg></button>
</div>
<svg class="swatches" viewBox="0 0 56 46"><path fill="#fff" stroke="#aaa" d="M16.500 14.500h36v27h-36z"/><path stroke="#777" d="M.500.500h36v27H.500z"/><path fill="#fff" stroke="#aaa" stroke-width=".5" d="M4 34h7v7H4z"/><path d="M0 30h7v7H0z"/><svg x="41" width="14" height="14"><use href="#swap"/></svg></svg>
<div class="dock-head"><h3>Paintbrush</h3><svg><use href="#menubox"/></svg></div>
<div class="options"><div class="fields">
<div class="row r26"><label for="mode2">Mode:</label><select id="mode2" class="combo"><option>Normal</option></select></div>
<div class="row r27"><label for="op2">Opacity:</label><input type="range" id="op2" class="range" style="--v:78%" value="86"><span class="spin"><input value="100.0" aria-label="Opacity value"><svg><use href="#updown"/></svg></span></div>
<div class="row r35"><label for="br2">&nbsp;</label><button class="swatch" aria-label="Choose brush"><i class="d11"></i></button><input id="br2" class="name" aria-label="Brush"></div>
</div><div class="vscroll"><b></b></div></div>
</section>

<section class="window prefs two">
<div class="titlebar"><svg class="tri"><use href="#tri"/></svg><h2>Preferences</h2><span>+</span><span>×</span></div>
<div class="prefs-body">
<div class="tree-box"><ul class="tree">
<li><i></i><svg><use href="#grid"/></svg>Default Grid</li>
<li><i>▼</i><svg><use href="#imgwin"/></svg>Image Windows</li>
<li class="sub"><i></i><svg><use href="#imgwin"/></svg>Appearance</li>
<li class="sub"><i></i><svg><use href="#title"/></svg>Title &amp; Status</li>
<li><i></i><svg><use href="#display"/></svg>Display</li>
<li><i></i><svg><use href="#color"/></svg>Color Management</li>
<li><i>▼</i><svg><use href="#devices"/></svg>Input Devices</li>
<li class="sub"><i></i><svg><use href="#ctrl"/></svg>Input Controllers</li>
<li><i></i><svg><use href="#wins"/></svg>Window Management</li>
<li><i>▼</i><svg><use href="#folders"/></svg>Folders</li>
</ul><div class="vscroll"><b></b></div></div>
<div class="page">
<div class="page-head"><h1>Plug-In Folders</h1><svg><use href="#bigplug"/></svg></div>
<div class="page-tools"><button class="btn" aria-label="New"><svg><use href="#newdoc"/></svg></button><button class="btn" aria-label="Up"><svg class="turned"><use href="#down"/></svg></button><button class="btn washed" aria-label="Down" disabled><svg><use href="#down"/></svg></button><button class="btn" aria-label="Delete"><svg class="red"><use href="#no"/></svg></button><svg class="valid"><use href="#ok"/></svg><input class="name" value="/cdrom/xsane" aria-label="Folder path"><button class="btn open" aria-label="Browse"><svg><use href="#open"/></svg></button></div>
<div class="folder-box"><table><thead><tr><th>Folder</th></tr></thead><tbody><tr><td>/home/ubuntu/.gimp-2.6/plug-ins</td></tr><tr><td>/usr/lib/gimp/2.0/plug-ins</td></tr><tr class="selected"><td>/cdrom/xsane</td></tr></tbody></table><div class="vscroll"><b></b></div></div>
</div>
</div>
</section>
<svg class="marks"><g transform="translate(-19 -871)"><path d="M723 1333L732 1327 748 1324 762 1315 784 1302 787 1296 779 1285 769 1270 762 1253 760 1237 761 1218 777 1203 793 1194 803 1193 822 1194 850 1200 875 1208 892 1217 902 1230 908 1245 907 1260 902 1272 895 1287 883 1300 864 1317 843 1330 830 1335 829 1341 814 1351 802 1356 788 1361 776 1362H758L725 1369 703 1374H650L632 1369 610 1366 590 1360 577 1352 567 1346 566 1335 573 1328 603 1318 627 1310 660 1309 690 1312 722 1313"/></g></svg>
</div>
</section>
</main>
</body>
</html>
```
FILE: styles.css
```css
* { box-sizing: border-box; }
body { margin: 0; background: #fff; color: #111; font: 13px/18px "Open Sans", "Noto Sans", sans-serif; }
ul { list-style: none; margin: 0; padding: 0; }
h1, h2, h3 { margin: 0; font-size: 12px; }
button, input, select { font: inherit; color: inherit; margin: 0; padding: 0; border: 0; background: none; border-radius: 0; }
i { font-style: normal; }
svg { flex: none; }
a { color: inherit; text-decoration: none; }
.sprite { position: absolute; }
.grow { flex: 1; }

main { display: flex; flex-direction: column; gap: 23px; padding: 34px 0 66px; }
.screen { position: relative; overflow: hidden; background: #1f5a8a; }
.first { margin: 0 62px 0 24px; min-height: 814px; }
.last { margin: 0 68px 0 19px; min-height: 504px; }
.desktop { position: absolute; inset: 0; }
.desktop.cropped { inset: -6px 0 0 -2px; }
.wallpaper { position: absolute; top: 0; left: 0; width: 1220px; height: 830px; }
.marks { position: absolute; inset: 0; width: 100%; height: 100%; pointer-events: none; fill: none; stroke: #e8141c; stroke-width: 2; stroke-linejoin: round; stroke-linecap: round; }

.panel { position: relative; display: flex; height: 25px; background: linear-gradient(#4c4c4c, #444); border-bottom: 1px solid #2c2c2c; color: #e0e0e0; }
.panel svg { width: 16px; height: 16px; }
.start { width: 32px; padding: 4px 0 0 4px; text-align: left; }
.task { display: flex; align-items: center; gap: 5px; width: 200px; padding: 0 0 0 3px; white-space: nowrap; }
.task.active { background: #2f2f2f; }
.tray { display: flex; align-items: center; gap: 8px; margin-left: auto; }
.tray .t18 { width: 18px; height: 14px; }
.tray .t20 { width: 20px; height: 16px; }
.tray time { margin: 0 1px 0 5px; }
.show { display: flex; align-items: center; width: 41px; height: 24px; padding-left: 3px; background: #2a2a2a; }

.shortcuts { position: absolute; top: 56px; left: 17px; width: 100px; }
.shortcuts.second { left: 119px; }
.shortcuts li { display: flex; flex-direction: column; align-items: center; gap: 6px; height: 102px; }
.shortcuts svg { width: 34px; height: 34px; }
.shortcuts span { padding: 3px 4px; border-radius: 4px; background: rgba(225, 235, 240, .58); color: #2e3e4e; white-space: nowrap; }

.window { position: absolute; display: flex; flex-direction: column; background: #cecece; border: 1px solid #a5a5a5; border-top-color: #eee; border-radius: 6px 6px 0 0; box-shadow: 0 3px 12px rgba(0, 0, 0, .55); overflow: hidden; }
.titlebar { display: flex; align-items: center; height: 24px; padding: 0 3px; background: linear-gradient(#e6e6e6, #cecece); color: #666; flex: none; }
.titlebar.off { color: #9b9b9b; }
.titlebar h2 { flex: 1; min-width: 0; text-align: center; white-space: nowrap; text-shadow: 0 1px #eee; }
.titlebar span { width: 22px; text-align: center; font-weight: 700; font-size: 15px; opacity: .75; flex: none; }
.titlebar.off span { opacity: .55; }
.titlebar .tri { width: 8px; height: 6px; margin: 0 7px; fill: #aaa; }
.grip { position: absolute; right: 3px; bottom: 3px; width: 6px; height: 6px; background: linear-gradient(135deg, transparent 50%, #aaa 50%); }

.btn { display: flex; align-items: center; justify-content: center; gap: 2px; height: 28px; border: 1px solid #9a9a9a; border-radius: 3px; background: linear-gradient(#ececec, #c9c9c9); box-shadow: 0 1px 1px rgba(0, 0, 0, .2); color: #3a3a3a; white-space: nowrap; }
.btn svg { width: 20px; height: 20px; }
.btn.pressed { background: #a9a9a9; border-color: #7d7d7d; }
.btn.dim { background: linear-gradient(#c4c8cc, #aab0b6); }
.actions { display: flex; gap: 8px; flex: none; }
.actions .btn { width: 83px; }
.menubar { display: flex; gap: 18px; padding: 0 9px; height: 20px; flex: none; color: #000; }

.vscroll { width: 14px; padding: 2px; background: #ececec; flex: none; display: flex; }
.vscroll b { flex: 1; border: 1px solid #a4a4a4; border-radius: 5px; background: linear-gradient(90deg, #e0e0e0, #c8c8c8); }
.hscroll { display: flex; width: 142px; height: 15px; margin-left: 1px; padding: 3px; background: #f4f4f4; flex: none; }
.hscroll b { flex: 1; border: 1px solid #a4a4a4; border-radius: 5px; background: #dadada; }

.image1 { left: 312px; top: 105px; width: 655px; height: 120px; }
.image1 .ruler { width: 186px; height: 50px; }
.image1 .titlebar h2 { flex: none; margin-left: 115px; }
.image2 { left: 289px; top: 108px; width: 564px; height: 209px; }
.silhouette { width: 562px; height: 160px; }

.toolbox { left: 84px; top: 83px; width: 162px; height: 593px; font-size: 12px; color: #3c3c3c; }
.toolbox .banner { width: 144px; height: 26px; margin: 0 8px 1px; }
.tools { display: grid; grid-template-columns: repeat(5, 32px); grid-auto-rows: 32px; flex: none; }
.tools button { display: flex; align-items: center; justify-content: center; border-radius: 3px; border: 1px solid transparent; margin: 1px; }
.tools button.on { background: #aeaeae; border-color: #808080; }
.tools svg { width: 22px; height: 22px; }
.swatches { width: 56px; height: 46px; margin: 4px 0 0 53px; }
.dock-head { display: flex; align-items: center; justify-content: space-between; height: 24px; padding: 0 8px 0 1px; color: #000; flex: none; }
.toolbox .dock-head { height: 29px; padding-top: 4px; border-top: 1px solid #aaa; }
.dock-head h3 { font-size: 12px; }
.dock-head svg { width: 12px; height: 12px; }
.options { display: flex; height: 186px; padding: 0 2px 0 1px; overflow: hidden; flex: none; }
.fields { width: 142px; }
.row { display: flex; align-items: center; gap: 3px; white-space: nowrap; }
.row > label { width: 42px; }
.r24 { height: 24px; }
.r26 { height: 26px; }
.r27 { height: 27px; }
.r34 { height: 34px; }
.r35 { height: 35px; }
.options .vscroll { height: 186px; background: #fafafa; }
.options .vscroll b { flex: 1; height: 136px; }
.combo { flex: 1; height: 24px; min-width: 0; padding: 0 5px; appearance: none; border: 1px solid #9a9a9a; border-radius: 3px; background: url("data:image/svg+xml,%3Csvg xmlns='http://www.w3.org/2000/svg' width='6' height='14'%3E%3Cpath fill='%23555' d='M3 1l3 3H0zM3 13l3-3H0z'/%3E%3C/svg%3E") right 6px center no-repeat, linear-gradient(#dedede, #c2c2c2); }
.combo.faded { color: #999; background-blend-mode: screen; border-color: #aaa; opacity: .6; }
.range { flex: 1; min-width: 0; width: 30px; height: 14px; appearance: none; background: linear-gradient(90deg, #6b6b6b var(--v), #bbb var(--v)) center / 100% 4px no-repeat; }
.range::-webkit-slider-thumb { appearance: none; width: 12px; height: 12px; border-radius: 50%; background: #666; }
.row .range { margin-left: 1px; }
.spin { display: flex; width: 52px; height: 21px; border: 1px solid #999; border-radius: 3px; background: #fff; color: #222; flex: none; }
.spin input { width: 38px; padding-left: 3px; font-size: 12px; }
.spin svg { width: 12px; height: 19px; padding: 2px; background: #d4d4d4; color: #444; }
.spin.faded { background: #ccc; color: #999; }
.spin.faded svg { color: #999; }
.name { min-width: 0; flex: 1; height: 21px; padding: 0 3px; border: 1px solid #999; border-radius: 3px; background: #fff; color: #111; }
.row .name { padding: 0 1px 0 3px; }
.swatch { display: flex; align-items: center; justify-content: center; width: 32px; height: 32px; border: 3px solid #e0e0e0; outline: 1px solid #999; outline-offset: -1px; background: linear-gradient(135deg, #fff 84%, #7d96dd 84%); flex: none; }
.dyn { padding-left: 3px; }
.tick { padding-left: 3px; }
input[type="checkbox"] { appearance: none; width: 13px; height: 13px; border: 1px solid #aaa; border-radius: 2px; background: #fff; margin-right: 2px; flex: none; }
.tool-row { display: flex; align-items: center; justify-content: space-around; height: 30px; flex: none; }
.tool-row svg { width: 17px; height: 17px; }
.s16 { width: 16px; height: 16px; }
.grey { color: #a0a0a0; }
.pale { color: #bcbcbc; }
.blue { color: #6ea3dc; }
.red { color: #cf3040; }

.d1, .d3, .d4, .d5, .d7, .d9, .d11, .d13, .d15, .d17, .d19 { display: block; border-radius: 50%; background: #000; }
.d1 { width: 1px; height: 1px; }
.d3 { width: 3px; height: 3px; }
.d4 { width: 4px; height: 4px; }
.d5 { width: 5px; height: 5px; }
.d7 { width: 7px; height: 7px; }
.d9 { width: 9px; height: 9px; }
.d11 { width: 11px; height: 11px; }
.d13 { width: 13px; height: 13px; }
.d15 { width: 15px; height: 15px; }
.d17 { width: 17px; height: 17px; }
.d19 { width: 19px; height: 19px; }
.soft { background: #555; }

.brushes { left: 979px; top: 623px; width: 212px; height: 154px; padding-left: 3px; background: #d6d6d6; border-radius: 0; font-size: 12px; color: #3c3c3c; }
.brush-box { display: flex; justify-content: space-between; width: 202px; height: 89px; overflow: hidden; background: #fff; flex: none; }
.brush-grid { display: grid; grid-template-columns: repeat(5, 34px); grid-auto-rows: 34px; }
.brush-grid span { display: flex; align-items: center; justify-content: center; background: linear-gradient(135deg, transparent 50%, #7d96dd 50%) right 2px bottom 1px / 5px 5px no-repeat; }
.brush-grid .picked { border: 1px solid #000; }
.brush-box .vscroll b { height: 20px; }
.spacing { display: flex; align-items: center; gap: 5px; height: 29px; width: 202px; }
.spacing .spin { width: 58px; }
.spacing .spin input { width: 44px; }
.brushes .tool-row { height: 28px; border-bottom: 1px solid #999; }

.prefs { width: 656px; height: 599px; }
.prefs.one { left: 312px; top: 201px; }
.prefs.two { left: 346px; top: 237px; }
.prefs-body { display: flex; gap: 13px; height: 496px; margin: 10px 13px 0 12px; flex: none; }
.tree-box { display: flex; width: 208px; border: 1px solid #b0b0b0; background: #fcfcfc; overflow: hidden; flex: none; }
.tree { flex: 1; min-width: 0; margin-top: -10px; color: #000; }
.tree li { display: flex; align-items: center; height: 24px; white-space: nowrap; }
.tree li i { width: 12px; margin: 0 3px 0 0; font-size: 11px; text-align: center; }
.tree svg { width: 21px; height: 21px; margin-right: 5px; }
.tree .sub { padding-left: 14px; }
.selected { background: linear-gradient(#a5bcd6, #8fabc8); color: #fff; }
.blank { display: flex; justify-content: flex-end; flex: 1; border: 1px solid #b0b0b0; background: #fcfcfc; }
.prefs .actions { margin: 25px 12px 0; }
.two .tree-box .vscroll { padding-top: 133px; }

.page { display: flex; flex-direction: column; flex: 1; min-width: 0; }
.page-head { display: flex; align-items: center; justify-content: space-between; height: 60px; padding: 0 5px; background: #9fb6d0; color: #fff; flex: none; }
.page-head h1 { font-size: 16px; }
.page-head svg { width: 44px; height: 44px; }
.page-tools { display: flex; align-items: center; gap: 2px; height: 30px; margin: 11px 0 3px; flex: none; }
.page-tools .btn { width: 28px; }
.page-tools .valid { width: 20px; height: 20px; margin: 0 2px 0 4px; }
.page-tools .name { height: 26px; }
.page-tools .open { margin-left: 5px; background: #c4d0dc; }
.turned { transform: rotate(180deg); }
.washed svg { filter: grayscale(1); opacity: .4; }
table { border-collapse: collapse; width: 100%; }
th { height: 22px; padding: 0 4px; font-weight: 400; text-align: left; color: #444; background: #fff; border-bottom: 1px solid #aaa; }
td { height: 23px; padding: 0 4px; white-space: nowrap; }
.folder-box { display: flex; align-items: flex-start; flex: 1; border: 1px solid #aaa; background: #fcfcfc; }
.folder-box .vscroll { align-self: stretch; }

.layers { left: 979px; top: 187px; width: 212px; height: 400px; color: #999; font-size: 12px; }
.image-row { display: flex; gap: 5px; height: 29px; flex: none; }
.image-row .combo, .image-row .btn { height: 28px; }
.auto { width: 33px; }
.tabs { display: flex; gap: 2px; height: 34px; padding-top: 6px; border-bottom: 1px solid #999; flex: none; }
.tab { display: flex; align-items: center; justify-content: center; width: 29px; height: 28px; border: 1px solid #999; border-bottom: 0; border-radius: 3px 3px 0 0; background: #bbb; }
.tab.now { background: #d4d4d4; }
.tab svg { width: 24px; height: 22px; }
.tab-body { padding: 0 4px 0 1px; background: #d2d2d2; }
.tab-body .dock-head { padding-right: 6px; }
.tab-body input[type="checkbox"] { background: none; margin: 0 3px 0 3px; }
.layer-list { height: 110px; border: 1px solid #aaa; background: #fcfcfc; }

.chooser { left: 498px; top: 28px; width: 783px; height: 610px; }
.pathbar { display: flex; gap: 2px; height: 32px; margin: 9px 12px 13px 11px; flex: none; }
.pathbar .btn { height: 31px; padding: 0 3px; }
.pathbar .edit { width: 28px; margin-right: 12px; }
.pathbar .crumb { width: 50px; }
.pathbar .pressed { width: 45px; font-weight: 700; font-size: 12px; }
.pathbar .s16 { width: 16px; height: 16px; }
.pathbar .create { width: 88px; }
.panes { display: flex; height: 464px; margin: 0 12px 18px 10px; flex: none; }
.places { display: flex; flex-direction: column; width: 148px; border: 1px solid #aaa; background: #fcfcfc; color: #000; flex: none; }
.places h3 { height: 22px; padding: 2px 3px; border-bottom: 1px solid #aaa; background: #fff; color: #444; font-weight: 400; font-size: 13px; flex: none; }
.places ul { flex: 1; }
.places li { display: flex; align-items: center; gap: 4px; height: 23px; padding-left: 2px; white-space: nowrap; }
.places li.ruled { height: 25px; padding-top: 1px; border-top: 1px solid #ddd; }
.places svg { width: 16px; height: 16px; }
.places-bar { display: flex; align-items: center; gap: 10px; height: 29px; padding-left: 5px; border-top: 1px solid #aaa; background: linear-gradient(#cfcfcf, #b8b8b8); flex: none; }
.sash { width: 6px; background: repeating-linear-gradient(#888 0 1px, transparent 1px 3px) center / 4px 9px no-repeat; }
.files { flex: 1; border: 1px solid #aaa; background: #fcfcfc; }
.files table { table-layout: fixed; }
.files th .tri { float: right; width: 8px; height: 8px; margin: 6px 2px 0; fill: #555; }
.files th + th { border-left: 1px solid #ccc; }
.c-size { width: 59px; }
.c-mod { width: 89px; }
.files td { color: #999; }
.files td svg { width: 15px; height: 15px; margin-right: 4px; vertical-align: -2px; }
.files td + td { border-left: 1px dotted #777; }
.files tbody tr:first-child td:first-child { background: #ebebeb; }
.files tbody tr:last-child td { background: #ececec; }
.files tbody tr:last-child td:first-child { background: #dadada; }
.chooser .actions { margin-right: 19px; }
```
